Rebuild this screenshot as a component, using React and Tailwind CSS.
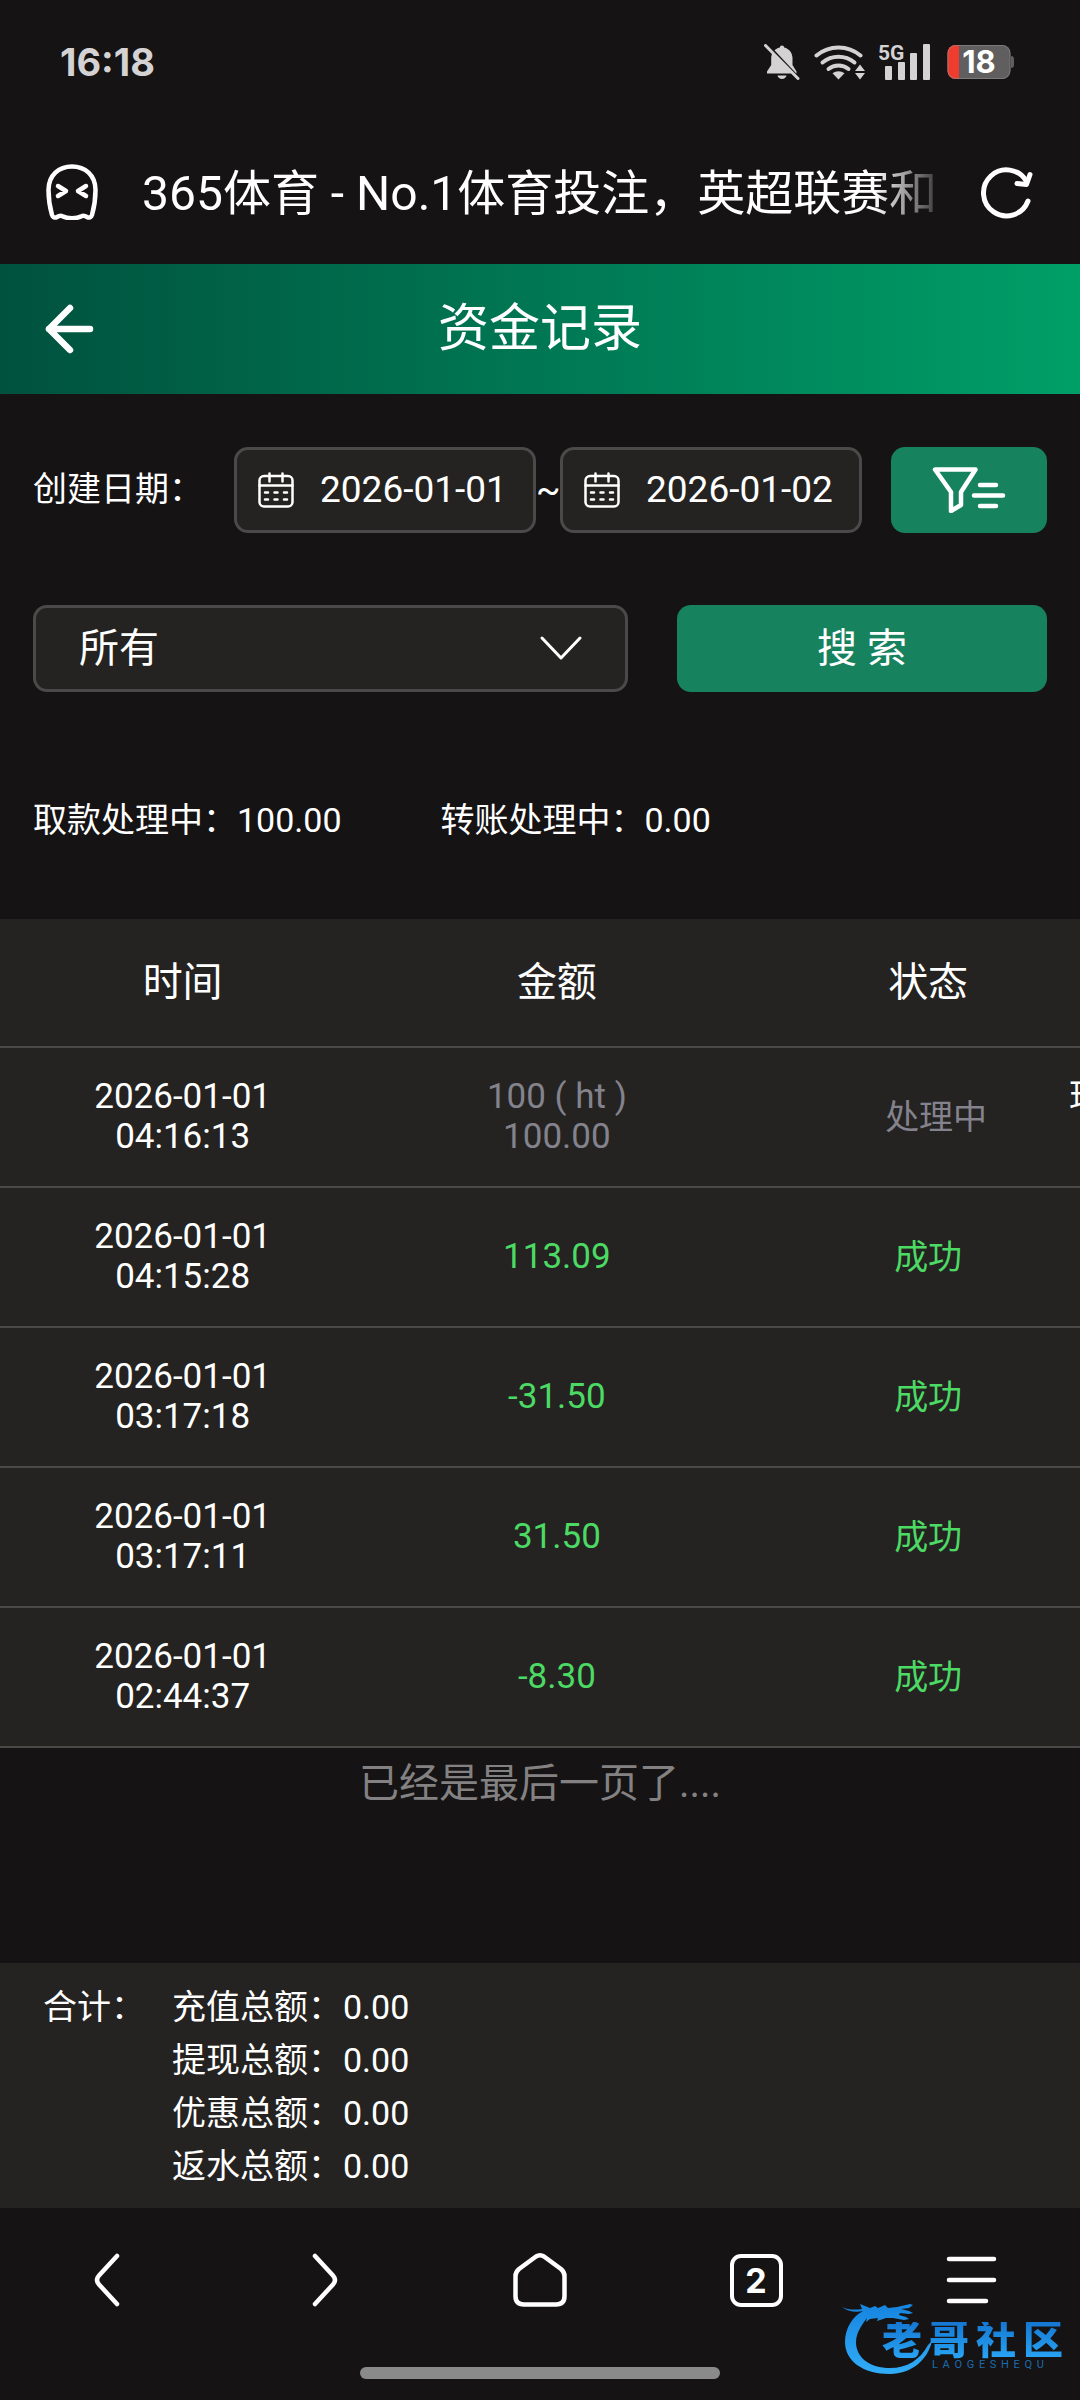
import React from "react";

const records = [
  { date: "2026-01-01", time: "04:16:13", amount: ["100 ( ht )", "100.00"], status: "处理中", pending: true, note: "现" },
  { date: "2026-01-01", time: "04:15:28", amount: ["113.09"], status: "成功" },
  { date: "2026-01-01", time: "03:17:18", amount: ["-31.50"], status: "成功" },
  { date: "2026-01-01", time: "03:17:11", amount: ["31.50"], status: "成功" },
  { date: "2026-01-01", time: "02:44:37", amount: ["-8.30"], status: "成功" },
];

const totals = [
  ["充值总额：", "0.00"],
  ["提现总额：", "0.00"],
  ["优惠总额：", "0.00"],
  ["返水总额：", "0.00"],
];

function StatusBar() {
  return (
    <div className="flex h-[124px] items-center justify-between pl-[60px] pr-[66px]">
      <span className="font-[Inter,sans-serif] text-[38px] leading-[40px] font-bold text-[#d4d2d3]">16:18</span>
      <div className="flex items-center">
        <svg width="36" height="36" viewBox="0 0 36 36" className="mr-[14px]" fill="#d4d2d3">
          <path d="M18 1.5c1.3 0 2 .8 2.200 2 5 1.300 8.300 5.500 8.300 10.500v7l4 6.500v2H3v-2L7.200 21v-7c0-5 3.500-9.200 8.600-10.500.2-1.200.9-2 2.200-2z" />
          <path d="M13.500 31.500h9c-.6 2.200-2.300 3.500-4.500 3.500s-4-1.300-4.500-3.500z" />
          <path d="M-1 3.500L31 37.500" stroke="#161314" strokeWidth="3" transform="translate(3,-4)" />
          <path d="M1.500 1.500L34 34.500" stroke="#d4d2d3" strokeWidth="3" strokeLinecap="round" />
        </svg>
        <svg width="52" height="36" viewBox="0 0 52 36" className="mr-[13px]" fill="none" stroke="#d4d2d3" strokeWidth="4" strokeLinecap="round">
          <path d="M2.500 11.500a34 34 0 0 1 44 0" />
          <path d="M8.500 18.500a25 25 0 0 1 32 0" />
          <path d="M14.500 25a16 16 0 0 1 20 0" />
          <path d="M24.500 35.500l-6-6.200c3.500-2.900 8.500-2.900 12 0z" fill="#d4d2d3" stroke="none" />
          <path d="M46 20.500l5 6.500H41zM46 35.500l5-6.500H41z" fill="#d4d2d3" stroke="none" />
        </svg>
        <svg width="52" height="38" viewBox="0 0 52 38" className="mr-[16px]" fill="#d4d2d3">
          <text x="-1" y="17" fontFamily="Roboto, sans-serif" fontWeight="700" fontSize="21">5G</text>
          <rect x="6" y="23" width="7" height="14" rx="1" />
          <rect x="19" y="19" width="7" height="18" rx="1" />
          <rect x="31" y="10" width="7" height="27" rx="1" />
          <rect x="44" y="1" width="7" height="36" rx="1" />
        </svg>
        <svg width="67" height="36" viewBox="0 0 67 36">
          <clipPath id="battery"><rect x="0.500" y="1" width="63" height="34" rx="8" /></clipPath>
          <path d="M64 12q3 0 3 3v6q0 3-3 3z" fill="#605e5f" />
          <g clipPath="url(#battery)">
            <rect width="64" height="36" fill="#605e5f" />
            <rect width="12" height="36" fill="#f03b2f" />
          </g>
          <rect x="1" y="1.500" width="62" height="33" rx="8" fill="none" stroke="#8f8d8e" strokeOpacity=".6" />
          <text x="32" y="29" textAnchor="middle" fontFamily="Inter, sans-serif" fontWeight="700" fontSize="31" fill="#fff">18</text>
        </svg>
      </div>
    </div>
  );
}

function AddressBar() {
  return (
    <div className="flex h-[140px] items-center pr-[46px] pb-[4px] pl-[46px]">
      <svg width="52" height="56" viewBox="0 0 52 56" fill="none" stroke="#fff" strokeWidth="4.500" strokeLinecap="round" strokeLinejoin="round">
        <path d="M2.500 26C2.500 11 13 2.500 26 2.500S49.500 11 49.500 26c0 9-1.500 18-3.500 25-.7 2.500-3 3.200-5 2-2-1.300-3.500-2-5.500-.8-3 1.700-6 2-9.500 2s-6.500-.3-9.500-2c-2-1.200-3.500-.5-5.500.8-2 1.200-4.300.5-5-2-2-7-3.500-16-3.500-25z" />
        <path d="M12 22l8 5-8 5M40 22l-8 5 8 5" />
      </svg>
      <div className="ml-[44px] min-w-0 flex-1 overflow-hidden pt-[4px] text-[48px] leading-[70px] whitespace-nowrap text-white mask-[linear-gradient(to_right,black_92%,rgb(0_0_0/0.15))]">
        365体育 - No.1体育投注，英超联赛和
      </div>
      <button aria-label="刷新" className="ml-[42px]">
        <svg width="54" height="54" viewBox="0 0 54 54" fill="none" stroke="#fff" strokeWidth="5" strokeLinecap="round" strokeLinejoin="round">
          <path d="M48 36A23 23 0 1 1 46.500 16.500" />
          <path d="M37 18.500l9.500 1L50 9.500" />
        </svg>
      </button>
    </div>
  );
}

function TitleBar() {
  return (
    <header className="grid h-[130px] grid-cols-[1fr_auto_1fr] items-center bg-linear-to-r from-[#00523e] to-[#009f68] px-[44px]">
      <button aria-label="返回" className="justify-self-start">
        <svg width="52" height="52" viewBox="0 0 52 52" fill="none" stroke="#fff" strokeWidth="6.500" strokeLinecap="round" strokeLinejoin="round">
          <path d="M26 5L5 26l21 21M5 26h41" />
        </svg>
      </button>
      <h1 className="text-[51px] leading-[60px] text-white">资金记录</h1>
    </header>
  );
}

function DateField({ id, label, value }) {
  return (
    <label htmlFor={id} className="flex h-[86px] min-w-0 flex-1 items-center rounded-[14px] border-[3px] border-[#4b4949] bg-[#242321] pl-[21px]">
      <svg width="36" height="36" viewBox="0 0 36 36" fill="none" stroke="#fff" strokeWidth="2.500" strokeLinecap="round" className="shrink-0">
        <rect x="1.500" y="4" width="33" height="30.500" rx="4.500" />
        <path d="M1.500 13.500h33M11.500 1.500v8M24.500 1.500v8" />
        <path d="M7 20.500h3M16.500 20.500h3M26 20.500h3M7 27.500h3M16.500 27.500h3M26 27.500h3" />
      </svg>
      <input id={id} aria-label={label} defaultValue={value} className="ml-[26px] w-full min-w-0 bg-transparent text-[37px] leading-[44px] text-white outline-none" />
    </label>
  );
}

function Filters() {
  return (
    <form className="px-[33px] pt-[53px]" onSubmit={(e) => e.preventDefault()}>
      <div className="flex items-center">
        <span className="w-[201px] shrink-0 pb-[2px] text-[34px] leading-[50px] text-white">创建日期：</span>
        <DateField id="from" label="开始日期" value="2026-01-01" />
        <span className="w-[24px] shrink-0 text-center text-[36px] leading-[44px] text-white">~</span>
        <DateField id="to" label="结束日期" value="2026-01-02" />
        <button type="button" aria-label="筛选" className="ml-[29px] flex h-[86px] w-[156px] shrink-0 items-center justify-center rounded-[14px] bg-[#17825e]">
          <svg width="74" height="46" viewBox="0 0 74 46" fill="none" stroke="#fff" strokeWidth="4.500" strokeLinecap="round" strokeLinejoin="round">
            <path d="M3 2.500h40.500L29 25v13L19 44V25z" />
            <path d="M48 18h16M42 28.500h29M48 39h16" />
          </svg>
        </button>
      </div>
      <div className="mt-[72px] flex items-center gap-[49px]">
        <div className="relative flex-[595]">
          <select aria-label="类型" className="h-[87px] w-full appearance-none rounded-[14px] border-[3px] border-[#4b4949] bg-[#242321] pl-[43px] text-[40px] text-white outline-none">
            <option>所有</option>
          </select>
          <svg width="42" height="26" viewBox="0 0 42 26" fill="none" stroke="#fff" strokeWidth="3" strokeLinecap="round" strokeLinejoin="round" className="pointer-events-none absolute top-[31px] right-[46px]">
            <path d="M2 2l19 20L40 2" />
          </svg>
        </div>
        <button className="h-[87px] flex-[370] rounded-[14px] bg-[#17825e] text-[40px] text-white">搜 索</button>
      </div>
    </form>
  );
}

function RecordTable() {
  return (
    <div className="overflow-hidden bg-[#242321]">
      <table className="w-[137.5%] table-fixed border-collapse text-center text-[35px] leading-[40px] text-white">
        <thead>
          <tr className="h-[128px] border-b-2 border-[#4a4948] text-[40px]">
            <th className="pr-[6px] font-normal">时间</th>
            <th className="font-normal">金额</th>
            <th className="font-normal">状态</th>
            <th aria-label="备注" />
          </tr>
        </thead>
        <tbody>
          {records.map((r) => (
            <tr key={r.time} className="h-[140px] border-b-2 border-[#4a4948]">
              <td className="pr-[6px]">
                {r.date}
                <br />
                {r.time}
              </td>
              <td className={r.pending ? "text-[#83828d]" : "text-[#4cd964]"}>
                {r.amount.map((a) => (
                  <div key={a}>{a}</div>
                ))}
              </td>
              <td className={r.pending ? "pl-[16px] text-[34px] text-[#83828d]" : "text-[34px] text-[#4cd964]"}>{r.status}</td>
              <td className="pt-[30px] text-left align-top">
                <div className="-ml-[45px]">{r.note}</div>
              </td>
            </tr>
          ))}
        </tbody>
      </table>
    </div>
  );
}

function Totals() {
  return (
    <section className="flex bg-[#242321] px-[43px] pt-[18px] pb-[15px] text-[34px] leading-[53px] text-white">
      <span className="w-[129px]">合计：</span>
      <dl>
        {totals.map(([k, v]) => (
          <div key={k} className="flex gap-px">
            <dt>{k}</dt>
            <dd>{v}</dd>
          </div>
        ))}
      </dl>
    </section>
  );
}

function Dragon() {
  return (
    <svg width="92" height="74" viewBox="0 0 92 74" className="shrink-0">
      <defs>
        <linearGradient id="dragon" x1="0" y1="0" x2="0" y2="1">
          <stop offset="0" stopColor="#1684e0" />
          <stop offset="1" stopColor="#31adf8" />
        </linearGradient>
      </defs>
      <path
        fill="url(#dragon)"
        d="M0 5c6 3 13 3 20 2l-2-5 10 4 5-2 3 2 7-3 3 3 9-1 13-3 3 1-4 3-8 1 8 2 4 2-4 1-9-1-1 2 7 2 3 2-5 1-11-2-7 0-9 3 1-3-8 1-4 3 1-4C22 20 14 30 14 40c0 16 14 26 34 26 17 0 30-8 38-23l4-4C86 58 69 72 48 72 21 72 3 59 3 40 3 26 11 14 21 9 13 11 5 9 0 5z"
      />
    </svg>
  );
}

function Watermark() {
  return (
    <div className="pointer-events-none absolute right-[17px] bottom-[24px] flex text-[#1e97ee]">
      <Dragon />
      <div className="-ml-[52px] flex flex-col pt-[20px]">
        <div className="flex gap-[7px] bg-linear-to-b from-[#1577d2] to-[#2aa6f5] bg-clip-text text-[40px] leading-[38px] font-black text-transparent">
          {["老", "哥", "社", "区"].map((c) => (
            <span key={c}>{c}</span>
          ))}
        </div>
        <div className="ml-[50px] flex w-[112px] justify-between text-[11px] leading-[10px] text-[#1b6cae]">
          {[..."LAOGESHEQU"].map((c, i) => (
            <span key={i}>{c}</span>
          ))}
        </div>
      </div>
    </div>
  );
}

function BottomNav() {
  return (
    <footer className="relative flex h-[192px] flex-col items-center justify-between pb-[21px]">
      <nav className="grid h-[144px] w-full grid-cols-5 place-items-center">
        <button aria-label="后退">
          <svg width="56" height="56" viewBox="0 0 56 56" fill="none" stroke="#fff" strokeWidth="4.500" strokeLinecap="round">
            <path d="M37 4L19 23.500q-4 4.500 0 9L37 52" />
          </svg>
        </button>
        <button aria-label="前进">
          <svg width="56" height="56" viewBox="0 0 56 56" fill="none" stroke="#fff" strokeWidth="4.500" strokeLinecap="round">
            <path d="M19 4l18 19.500q4 4.500 0 9L19 52" />
          </svg>
        </button>
        <button aria-label="主页">
          <svg width="56" height="56" viewBox="0 0 56 56" fill="none" stroke="#fff" strokeWidth="4.500" strokeLinejoin="round">
            <path d="M24 4.500q4-2.500 8 0L49 17q3.500 3 3.500 7v20q0 8.500-8.500 8.500H12Q3.500 52.500 3.500 44V24q0-4 3.500-7z" />
          </svg>
        </button>
        <button aria-label="标签页" className="flex h-[53px] w-[53px] items-center justify-center rounded-[11px] border-4 border-white font-[Inter,sans-serif] text-[34px] font-bold text-white">
          2
        </button>
        <button aria-label="菜单">
          <svg width="56" height="56" viewBox="0 0 56 56" fill="none" stroke="#fff" strokeWidth="4.500" strokeLinecap="round">
            <path d="M5 7h45M5 28h45M5 49h37" />
          </svg>
        </button>
      </nav>
      <div className="h-[12px] w-1/3 rounded-full bg-[#8a8a8a]" />
      <Watermark />
    </footer>
  );
}

export default function App() {
  return (
    <div className="flex min-h-screen flex-col bg-[#161314] font-[Roboto,'Noto_Sans_CJK_SC',sans-serif]">
      <StatusBar />
      <AddressBar />
      <TitleBar />
      <main className="flex flex-1 flex-col">
        <Filters />
        <div className="flex gap-[99px] px-[33px] pt-[103px] pb-[74px] text-[34px] leading-[50px] text-white">
          <span>取款处理中：100.00</span>
          <span>转账处理中：0.00</span>
        </div>
        <RecordTable />
        <p className="mb-auto pt-[8px] text-center text-[40px] leading-[56px] text-[#838182]">已经是最后一页了....</p>
        <Totals />
      </main>
      <BottomNav />
    </div>
  );
}
